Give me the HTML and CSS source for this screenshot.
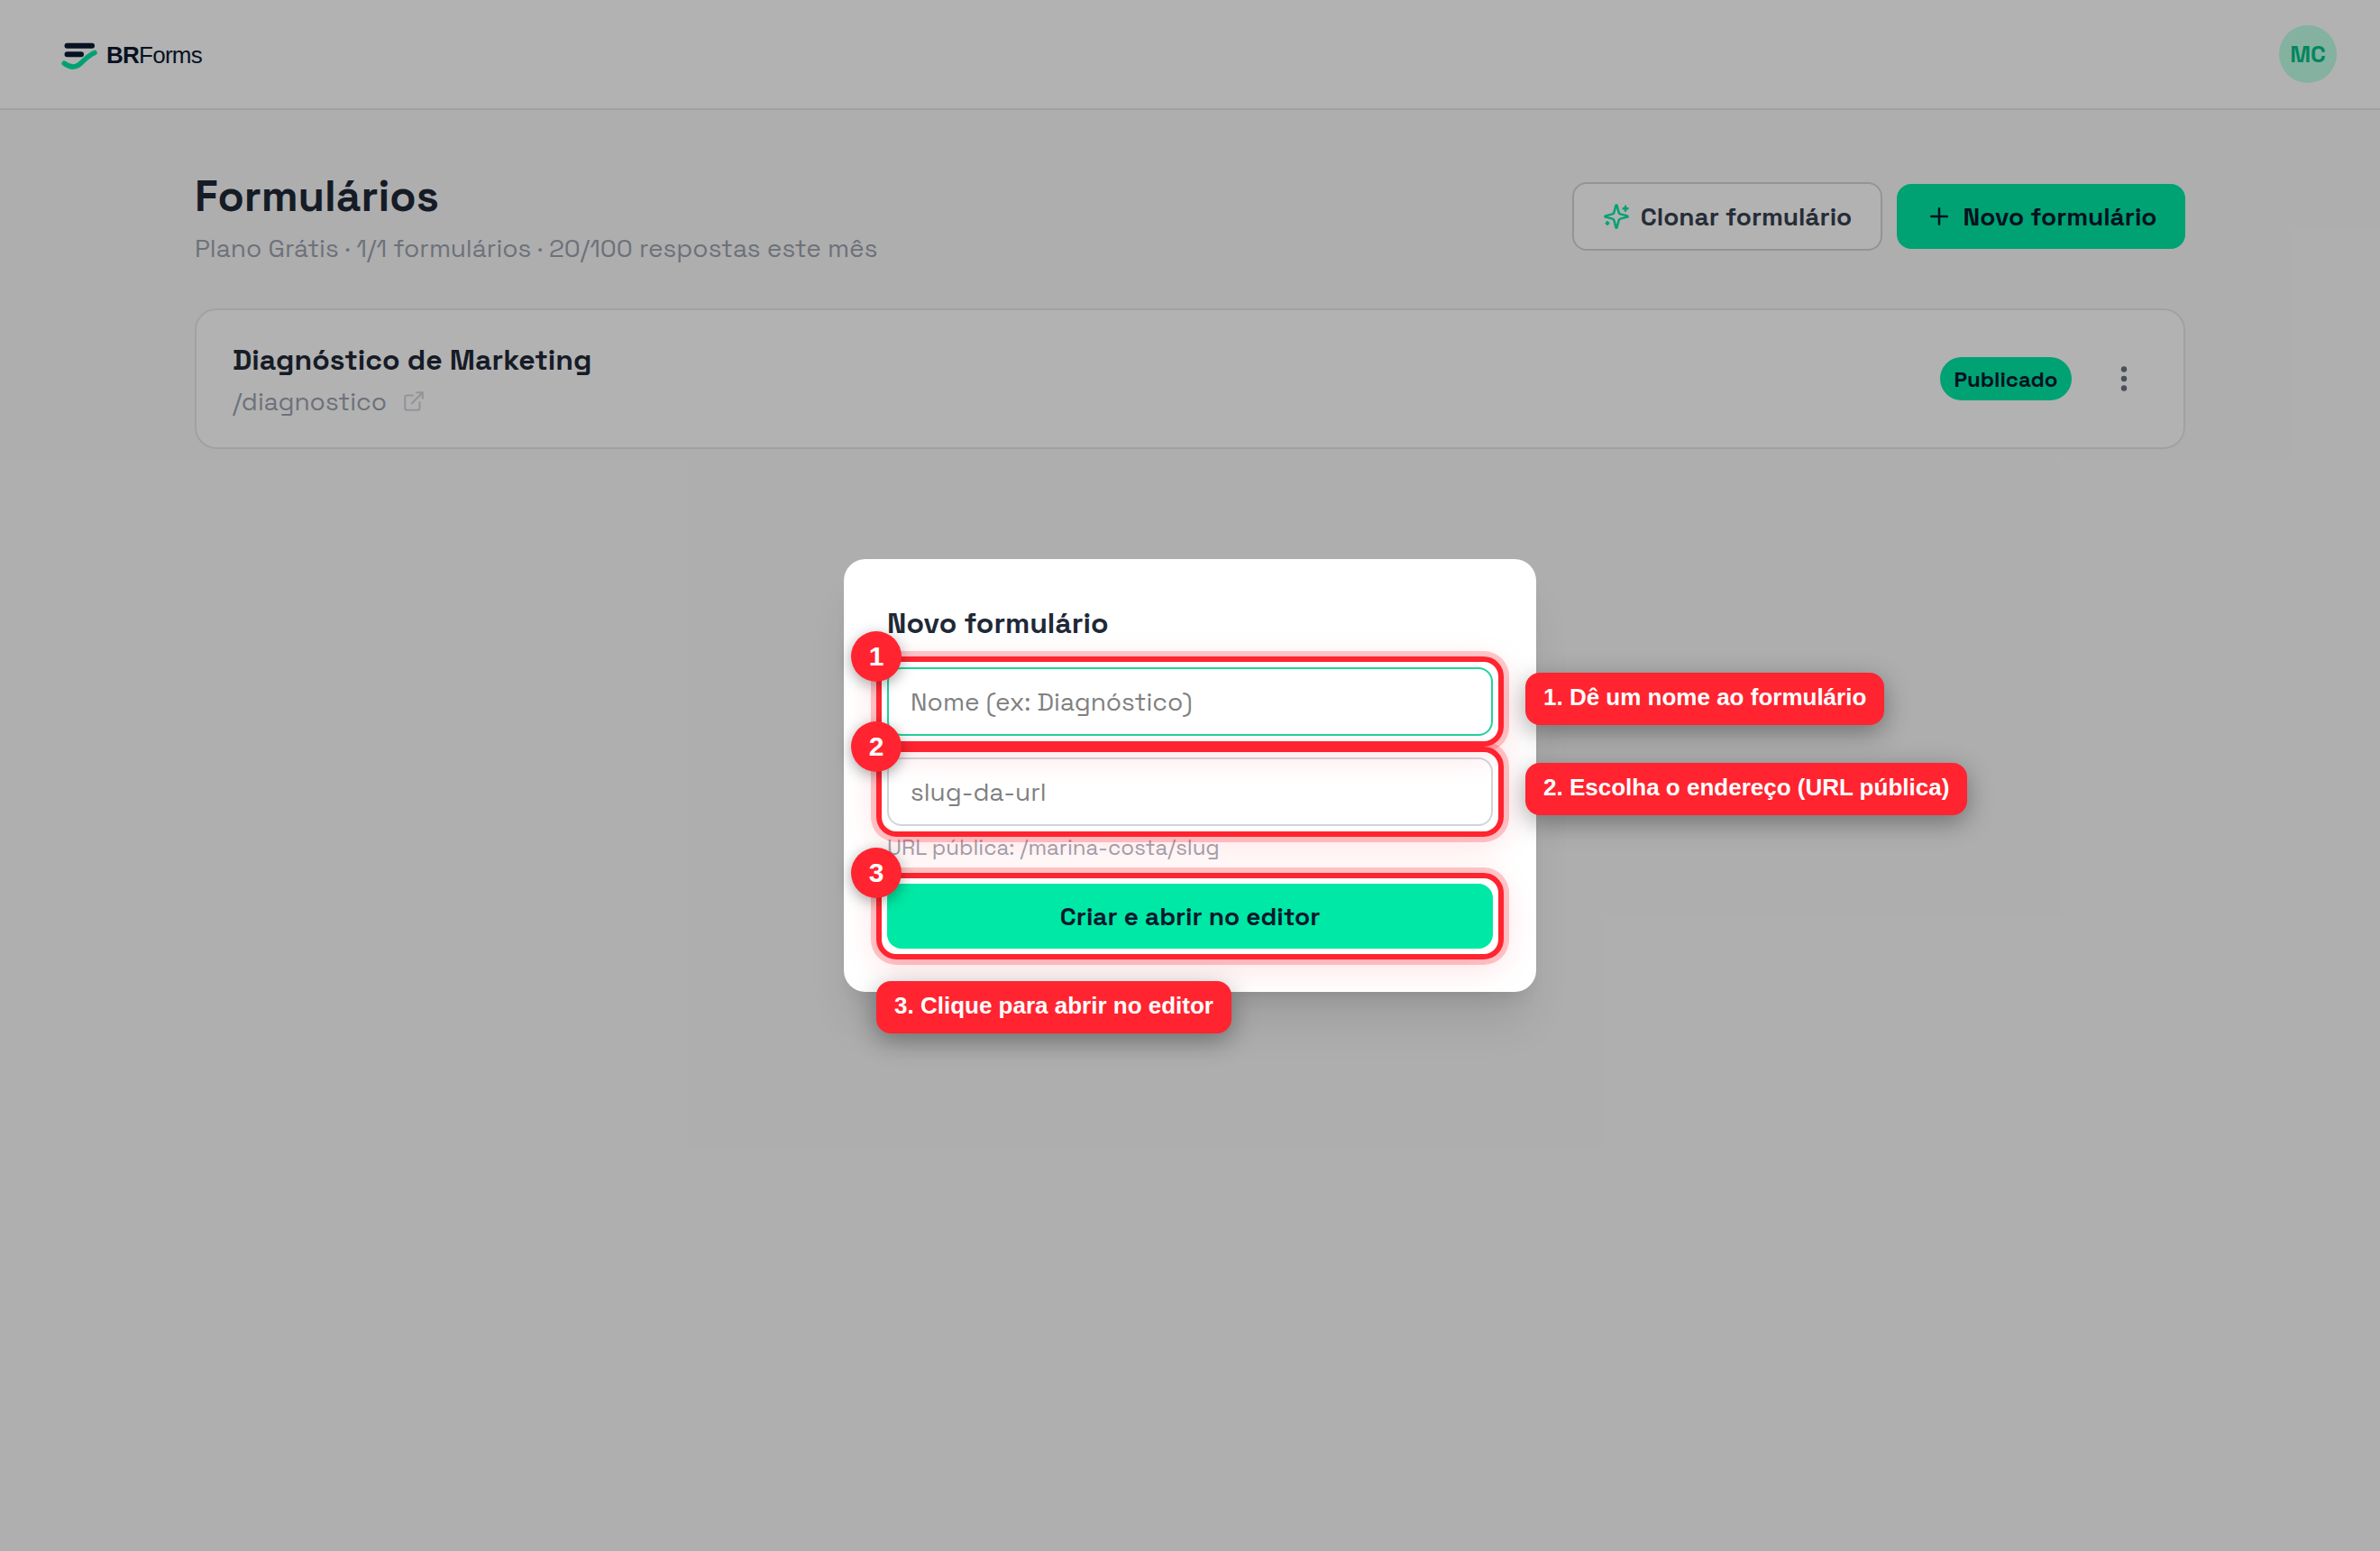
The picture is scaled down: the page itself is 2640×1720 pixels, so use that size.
FILE: index.html
```html
<!DOCTYPE html>
<html lang="pt-BR">
<head>
<meta charset="utf-8">
<title>BRForms</title>
<link rel="stylesheet" href="styles.css">
</head>
<body>
<header class="topbar">
  <div class="brand">
    <svg class="brand-mark" viewBox="0 0 40 32" fill="none" stroke-linecap="round"><path d="M6.500 4.800h27.500M6.500 14.300h15.500" stroke="#0b1a33" stroke-width="6"/><path d="M3.200 24.300C9 28.500 15 29.500 20 25.500C26 20.500 29 16 37 12.500" stroke="#00e8a5" stroke-width="5.600"/></svg>
    <span class="brand-name"><b>BR</b>Forms</span>
  </div>
  <div class="avatar">MC</div>
</header>
<main class="page">
  <div class="page-head">
    <div>
      <h1 class="title">Formulários</h1>
      <p class="subtitle">Plano Grátis · 1/1 formulários · 20/100 respostas este mês</p>
    </div>
    <div class="actions">
      <button class="btn btn-outline"><svg class="icon" viewBox="0 0 24 24" fill="none" stroke="#00e8a5" stroke-width="2" stroke-linejoin="round" stroke-linecap="round"><path d="M9.900 15.500A2 2 0 0 0 8.500 14.100L2.400 12.500a.5.5 0 0 1 0-1L8.500 9.900A2 2 0 0 0 9.900 8.500l1.600-6.100a.5.5 0 0 1 1 0l1.600 6.100a2 2 0 0 0 1.400 1.400l6.100 1.600a.5.5 0 0 1 0 1l-6.100 1.600a2 2 0 0 0-1.400 1.400l-1.600 6.100a.5.5 0 0 1-1 0z"/><path d="M20 3v4M22 5h-4M4 17v2M5 18H3"/></svg>Clonar formulário</button>
      <button class="btn btn-primary"><svg class="icon" viewBox="0 0 24 24" fill="none" stroke="#04192e" stroke-width="2" stroke-linecap="round"><path d="M5 12h14M12 5v14"/></svg>Novo formulário</button>
    </div>
  </div>
  <section class="card">
    <div>
      <h2 class="card-title">Diagnóstico de Marketing</h2>
      <p class="card-slug">/diagnostico<svg class="icon-ext" viewBox="0 0 24 24" fill="none" stroke="#d1d5db" stroke-width="2" stroke-linecap="round" stroke-linejoin="round"><path d="M15 3h6v6M10 14 21 3M18 13v6a2 2 0 0 1-2 2H5a2 2 0 0 1-2-2V8a2 2 0 0 1 2-2h6"/></svg></p>
    </div>
    <div class="card-side">
      <span class="status">Publicado</span>
      <svg class="icon-dots" viewBox="0 0 8 30" fill="#6b7280"><circle cx="4" cy="4.500" r="3.200"/><circle cx="4" cy="15" r="3.200"/><circle cx="4" cy="25.500" r="3.200"/></svg>
    </div>
  </section>
</main>
<div class="overlay">
  <div class="modal">
    <h2 class="modal-title">Novo formulário</h2>
    <div class="field field-focus">Nome (ex: Diagnóstico)</div>
    <div class="field">slug-da-url</div>
    <p class="hint">URL pública: /marina-costa/slug</p>
    <button class="submit">Criar e abrir no editor</button>
  </div>
</div>
<div class="tour">
  <div class="ring ring-3"></div><div class="ring ring-2"></div><div class="ring ring-1"></div>
  <div class="step step-1">1</div><div class="step step-2">2</div><div class="step step-3">3</div>
  <div class="tip tip-1">1. Dê um nome ao formulário</div>
  <div class="tip tip-2">2. Escolha o endereço (URL pública)</div>
  <div class="tip tip-3">3. Clique para abrir no editor</div>
</div>
</body>
</html>
```
FILE: styles.css
```css
* { box-sizing: border-box; }
body { margin: 0; height: 1720px; overflow: hidden; background: #fafafa; font-family: "Space Grotesk", Inter, sans-serif; color: #1f2937; }
h1, h2, p { margin: 0; }
button { border: 0; font: inherit; color: inherit; }
svg { display: block; flex: none; }

.topbar { height: 122px; padding: 0 48px 0 68px; display: flex; align-items: center; justify-content: space-between; background: #fff; border-bottom: 2px solid #e5e7eb; }
.brand { display: flex; align-items: center; gap: 10px; }
.brand-mark { width: 40px; height: 32px; margin-top: 4px; }
.brand-name { font: 26px/32px "Liberation Sans", sans-serif; letter-spacing: -.75px; color: #0b1a33; padding-top: 1px; }
.avatar { width: 64px; height: 64px; border-radius: 50%; background: #bdfee5; color: #00c187; font-size: 26px; line-height: 32px; font-weight: 700; display: flex; align-items: center; justify-content: center; }

.page { width: 2208px; margin: 0 auto; padding-top: 62px; }
.page-head { display: flex; justify-content: space-between; align-items: center; height: 112px; margin-bottom: 46px; }
.title { font-size: 48px; line-height: 64px; font-weight: 700; }
.subtitle { font-size: 28px; line-height: 40px; color: #9ca3af; margin-top: 5px; }
.actions { display: flex; align-items: center; gap: 16px; }
.btn { display: flex; align-items: center; justify-content: center; gap: 12px; padding: 0; height: 72px; border-radius: 16px; font-size: 28px; font-weight: 600; white-space: nowrap; }
.btn-outline { width: 344px; height: 76px; background: #fff; border: 2px solid #d1d5db; color: #374151; }
.btn-primary { width: 320px; background: #00e8a5; color: #04192e; }
.icon { width: 30px; height: 30px; }
.card { height: 156px; border: 2px solid #e5e7eb; border-radius: 24px; background: #fff; display: flex; align-items: center; justify-content: space-between; padding: 0 62px 0 40px; }
.card-title { font-size: 32px; line-height: 46px; font-weight: 700; }
.card-slug { display: flex; align-items: center; gap: 17px; margin-top: 3px; font-size: 28px; line-height: 40px; color: #9ca3af; }
.icon-ext { width: 26px; height: 26px; }
.card-side { display: flex; align-items: center; gap: 54px; }
.status { width: 146px; height: 48px; border-radius: 24px; background: #00e8a5; color: #04192e; font-size: 24px; font-weight: 600; display: flex; align-items: center; justify-content: center; }
.icon-dots { width: 8px; height: 30px; }

.overlay { position: absolute; inset: 0; background: rgba(0,0,0,.3); display: flex; align-items: center; justify-content: center; }
.modal { width: 768px; height: 480px; padding: 48px; border-radius: 24px; background: #fff; box-shadow: 0 40px 50px -10px rgba(0,0,0,.1), 0 16px 20px -12px rgba(0,0,0,.1); }
.modal-title { font-size: 32px; line-height: 46px; padding-bottom: 2px; font-weight: 700; }
.field { height: 76px; margin-top: 24px; padding: 0 24px; border: 2px solid #d1d5db; border-radius: 16px; display: flex; align-items: center; font-size: 28px; color: #808080; }
.field-focus { border-color: #1fd3a0; }
.hint { margin-top: 8px; font-size: 24px; line-height: 32px; color: #9ca3af; }
.submit { display: block; width: 100%; height: 72px; margin-top: 24px; padding: 0; border-radius: 16px; background: #00e8a5; color: #04192e; font-size: 28px; font-weight: 600; text-align: center; }

.tour { position: absolute; inset: 0; font-family: "Liberation Sans", sans-serif; font-weight: 700; color: #fff; }
.ring { position: absolute; left: 972px; width: 696px; height: 100px; border: 6px solid #ff2430; border-radius: 22px; box-shadow: 0 0 0 6px rgba(255,36,48,.25), 0 8px 36px rgba(255,36,48,.15); }
.ring-1 { top: 728px; }
.ring-2 { top: 828px; }
.ring-3 { top: 968px; height: 96px; }
.step { position: absolute; left: 944px; width: 56px; height: 56px; border-radius: 50%; background: #ff2430; font-size: 30px; line-height: 55px; text-align: center; box-shadow: 0 4px 16px rgba(0,0,0,.35); }
.step-1 { top: 700px; }
.step-2 { top: 800px; }
.step-3 { top: 940px; }
.tip { position: absolute; left: 1692px; height: 58px; padding: 0 20px; border-radius: 16px; background: #ff2430; font-size: 26px; line-height: 54px; white-space: nowrap; box-shadow: 0 8px 28px rgba(0,0,0,.35); }
.tip-1 { top: 746px; }
.tip-2 { top: 846px; }
.tip-3 { top: 1088px; left: 972px; }
```
